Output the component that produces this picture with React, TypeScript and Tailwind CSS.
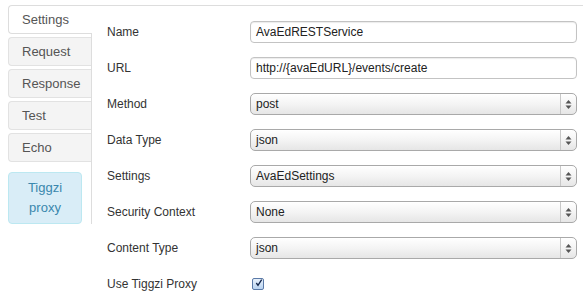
import type { ReactNode } from 'react';

const tabs = ['Settings', 'Request', 'Response', 'Test', 'Echo'];

function Arrows() {
  return (
    <svg width="7" height="11" viewBox="0 0 7 11" className="text-[#555]">
      <path d="M3.5 1 L6.5 4.5 L0.5 4.5 Z" fill="currentColor" />
      <path d="M3.5 10 L6.5 6.5 L0.5 6.5 Z" fill="currentColor" />
    </svg>
  );
}

function Select({ value }: { value: string }) {
  return (
    <div className="flex h-[22px] w-[327px] items-stretch rounded-[5px] border border-[#a9a9a9] bg-gradient-to-b from-white via-[#f4f4f4] to-[#e6e6e6] shadow-[inset_0_1px_0_#fff]">
      <div className="flex flex-1 items-center pl-[5px] text-[#222]">{value}</div>
      <div className="flex w-[16px] items-center justify-center border-l border-[#c8c8c8]">
        <Arrows />
      </div>
    </div>
  );
}

function Input({ value }: { value: string }) {
  return (
    <div className="flex h-[22px] w-[327px] items-center rounded-[4px] border border-[#c3c3c3] bg-white pl-[5px] text-[#222] shadow-[inset_0_1px_1px_rgba(0,0,0,0.08)]">
      {value}
    </div>
  );
}

function Row({ label, children }: { label: string; children: ReactNode }) {
  return (
    <div className="flex h-[22px] items-center">
      <div className="w-[158px] pl-[15px] text-[#333]">{label}</div>
      {children}
    </div>
  );
}

export default function App() {
  return (
    <div className="h-[303px] w-[583px] overflow-hidden bg-white text-[12px] font-['Liberation_Sans',Arial,sans-serif]">
      <div className="mt-[5px] flex">
        <div className="flex w-[92px] flex-col gap-[3px] self-start border-r border-[#dddddd] pl-2">
          {tabs.map((t, i) => (
            <div
              key={t}
              className={
                i === 0
                  ? '-mr-px flex h-[29px] items-center rounded-l-[4px] border border-r-0 border-[#dddddd] bg-white pl-[13px] pr-px text-[13px] text-[#555]'
                  : 'flex h-[29px] items-center rounded-l-[4px] border border-r-0 border-[#e2e2e2] bg-[#f4f4f4] pl-[13px] text-[13px] text-[#555]'
              }
            >
              {t}
            </div>
          ))}
          <div className="mr-[9px] mt-[7px] flex h-[52px] flex-col items-center justify-center rounded-[4px] border border-[#bce8f1] bg-[#d9edf7] text-[13px] leading-[20px] text-[#3a87ad]">
            <span>Tiggzi</span>
            <span>proxy</span>
          </div>
        </div>
        <div className="flex flex-1 flex-col gap-[14px] border-t border-[#dddddd] pt-[15px]">
          <Row label="Name">
            <Input value="AvaEdRESTService" />
          </Row>
          <Row label="URL">
            <Input value="http://{avaEdURL}/events/create" />
          </Row>
          <Row label="Method">
            <Select value="post" />
          </Row>
          <Row label="Data Type">
            <Select value="json" />
          </Row>
          <Row label="Settings">
            <Select value="AvaEdSettings" />
          </Row>
          <Row label="Security Context">
            <Select value="None" />
          </Row>
          <Row label="Content Type">
            <Select value="json" />
          </Row>
          <Row label="Use Tiggzi Proxy">
            <div className="ml-[2px] flex h-[12px] w-[12px] items-center justify-center rounded-[2px] border border-[#5a7aa8] bg-gradient-to-b from-[#e8f1fb] to-[#b9d3f0]">
              <svg width="12" height="12" viewBox="0 0 12 12" className="-mt-[3px] ml-[2px]">
                <path d="M2 6 L4.5 9.5 L10 1" fill="none" stroke="#12254a" strokeWidth="2" />
              </svg>
            </div>
          </Row>
        </div>
      </div>
    </div>
  );
}
